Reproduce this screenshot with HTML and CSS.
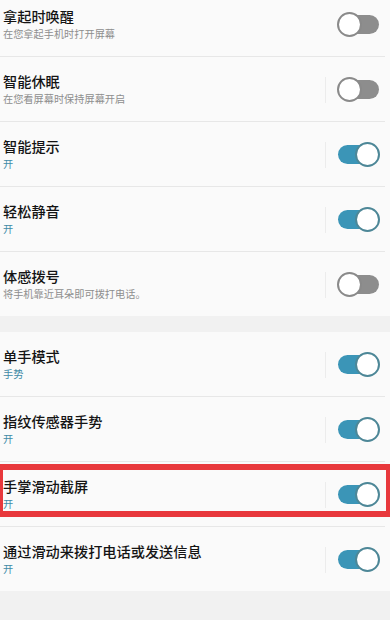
FILE: index.html
```html
<!DOCTYPE html>
<html lang="zh-CN">
<head>
<meta charset="utf-8">
<link rel="stylesheet" href="styles.css">
</head>
<body>
<div class="page">
  <div class="group first">
    <div class="row">
      <div class="text"><div class="title">拿起时唤醒</div><div class="sub">在您拿起手机时打开屏幕</div></div>
      <span class="sep none"></span>
      <span class="toggle"></span>
    </div>
    <div class="row">
      <div class="text"><div class="title">智能休眠</div><div class="sub">在您看屏幕时保持屏幕开启</div></div>
      <span class="sep"></span>
      <span class="toggle"></span>
    </div>
    <div class="row">
      <div class="text"><div class="title">智能提示</div><div class="sub on">开</div></div>
      <span class="sep"></span>
      <span class="toggle on"></span>
    </div>
    <div class="row">
      <div class="text"><div class="title">轻松静音</div><div class="sub on">开</div></div>
      <span class="sep"></span>
      <span class="toggle on"></span>
    </div>
    <div class="row last">
      <div class="text"><div class="title">体感拨号</div><div class="sub">将手机靠近耳朵即可拨打电话。</div></div>
      <span class="sep"></span>
      <span class="toggle"></span>
    </div>
  </div>
  <div class="group">
    <div class="row">
      <div class="text"><div class="title">单手模式</div><div class="sub on">手势</div></div>
      <span class="sep"></span>
      <span class="toggle on"></span>
    </div>
    <div class="row">
      <div class="text"><div class="title">指纹传感器手势</div><div class="sub on">开</div></div>
      <span class="sep"></span>
      <span class="toggle on"></span>
    </div>
    <div class="row marked">
      <div class="text"><div class="title">手掌滑动截屏</div><div class="sub on">开</div></div>
      <span class="sep"></span>
      <span class="toggle on"></span>
      <span class="highlight"></span>
    </div>
    <div class="row last">
      <div class="text"><div class="title">通过滑动来拨打电话或发送信息</div><div class="sub on">开</div></div>
      <span class="sep"></span>
      <span class="toggle on"></span>
    </div>
  </div>
</div>
</body>
</html>
```
FILE: styles.css
```css
html, body {
  margin: 0;
  padding: 0;
  background: #f1f1f1;
}
body {
  width: 390px;
  height: 620px;
  overflow: hidden;
  font-family: "Noto Sans CJK SC", "Noto Sans", sans-serif;
}
.page {
  display: flex;
  flex-direction: column;
  gap: 16px;
}
.group {
  background: #fafafa;
  display: flex;
  flex-direction: column;
}
.group.first {
  margin-top: -8px;
}
.row {
  position: relative;
  width: 385px;
  box-sizing: border-box;
  height: 65px;
  border-bottom: 1px solid #e7e7e7;
  display: flex;
  align-items: center;
  padding-left: 3px;
  padding-right: 5px;
}
.row.last {
  height: 64px;
  border-bottom: none;
}
.text {
  flex: 1;
  align-self: flex-start;
  padding-top: 15px;
  display: flex;
  flex-direction: column;
}
.title {
  font-size: 14.2px;
  line-height: 18px;
  font-weight: 500;
  color: #141414;
  white-space: nowrap;
}
.sub {
  margin-top: 2px;
  font-size: 10.2px;
  line-height: 14px;
  color: #8e8e8e;
  white-space: nowrap;
}
.sub.on {
  color: #3f8aa6;
}
.sep {
  width: 1px;
  height: 26px;
  background: #ececec;
  margin-right: 11px;
  margin-top: 1px;
}
.sep.none {
  background: transparent;
}
.toggle {
  position: relative;
  width: 43px;
  height: 25px;
  margin-top: 1px;
}
.toggle::before {
  content: "";
  position: absolute;
  left: 1px;
  right: 1px;
  top: 3px;
  bottom: 3px;
  border-radius: 10px;
  background: #8d8d8d;
}
.toggle::after {
  content: "";
  position: absolute;
  left: 0;
  top: 0;
  width: 21px;
  height: 21px;
  border-radius: 50%;
  background: #ffffff;
  border: 2px solid #8a8a8a;
}
.toggle.on::before {
  background: #3b95b7;
}
.toggle.on::after {
  left: auto;
  right: 0;
  border-color: #4d8797;
}
.row.marked .highlight {
  position: absolute;
  left: 0;
  top: 2px;
  width: 390px;
  height: 53px;
  box-sizing: border-box;
  border: 3px solid #e8383c;
  border-top-width: 6px;
  border-bottom-width: 6px;
  border-right-width: 4px;
  pointer-events: none;
}
```
